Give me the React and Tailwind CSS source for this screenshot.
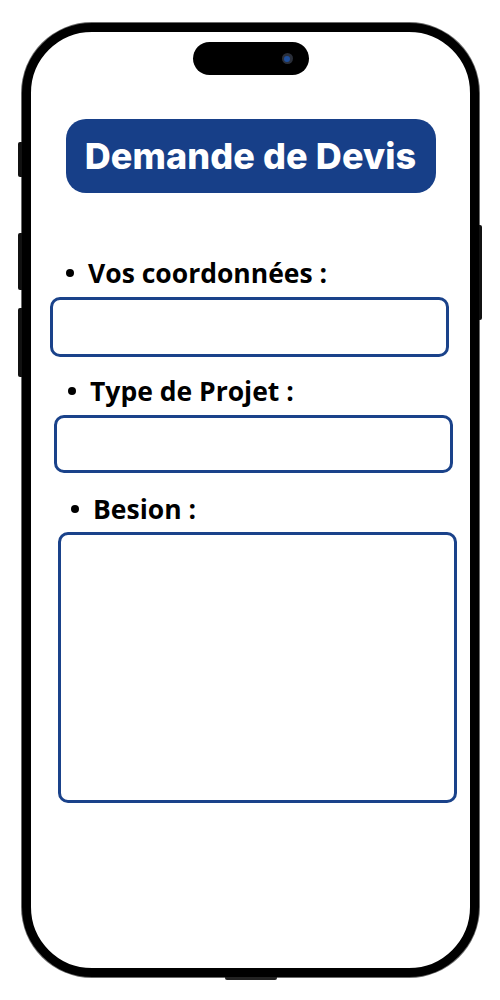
import React from 'react';

const Label = ({ children, className = '' }) => (
    <div className={`flex items-center h-[32px] leading-[32px] text-[26.5px] font-bold text-black ${className}`}>
        <span className="w-[8px] h-[8px] rounded-full bg-black shrink-0" />
        <span className="ml-[14px]">{children}</span>
    </div>
);

export default function App() {
    return (
        <div className="w-[500px] h-[1000px] bg-white pt-[23px] pl-[22px]" style={{ fontFamily: '"Open Sans", sans-serif' }}>
            {/* Phone frame */}
            <div className="relative w-[457px] h-[954px] rounded-[70px] border-[9px] border-black bg-white flex flex-col shadow-[0_0_0_1px_#6b6b6b]">
                {/* Side buttons */}
                <div className="absolute left-[-13px] top-[110px] w-[4px] h-[35px] rounded-l-[2px] bg-[#111]" />
                <div className="absolute left-[-13px] top-[201px] w-[4px] h-[57px] rounded-l-[2px] bg-[#111]" />
                <div className="absolute left-[-13px] top-[276px] w-[4px] h-[69px] rounded-l-[2px] bg-[#111]" />
                <div className="absolute right-[-12px] top-[193px] w-[3px] h-[95px] rounded-r-[2px] bg-[#111]" />
                <div className="absolute left-[194px] bottom-[-12px] w-[52px] h-[3px] rounded-b-[2px] bg-[#222]" />

                {/* Dynamic island */}
                <div className="self-center mt-[10px] w-[116px] h-[33px] rounded-full bg-black flex items-center justify-end pr-[16px]">
                    <div className="w-[11px] h-[11px] rounded-full bg-[#2a2f3a] flex items-center justify-center">
                        <div className="w-[6px] h-[6px] rounded-full bg-[#1f4f9c]" />
                    </div>
                </div>

                {/* Title */}
                <div className="self-center mt-[44px] w-[370px] h-[74px] rounded-[20px] bg-[#173f88] flex items-center justify-center">
                    <span className="text-white text-[36px] font-extrabold tracking-[0.1px]" style={{ fontFamily: 'Inter, sans-serif' }}>
                        Demande de Devis
                    </span>
                </div>

                {/* Form */}
                <Label className="mt-[64px] ml-[35px]">Vos coordonnées :</Label>
                <div className="mt-[8px] ml-[19px] w-[399px] h-[60px] rounded-[10px] border-[3px] border-[#1a428a]" />

                <Label className="mt-[18px] ml-[37px]">Type de Projet :</Label>
                <div className="mt-[8px] ml-[23px] w-[399px] h-[58px] rounded-[10px] border-[3px] border-[#1a428a]" />

                <Label className="mt-[20px] ml-[40px]">Besion :</Label>
                <div className="mt-[7px] ml-[27px] w-[399px] h-[271px] rounded-[10px] border-[3px] border-[#1a428a]" />
            </div>
        </div>
    );
}
